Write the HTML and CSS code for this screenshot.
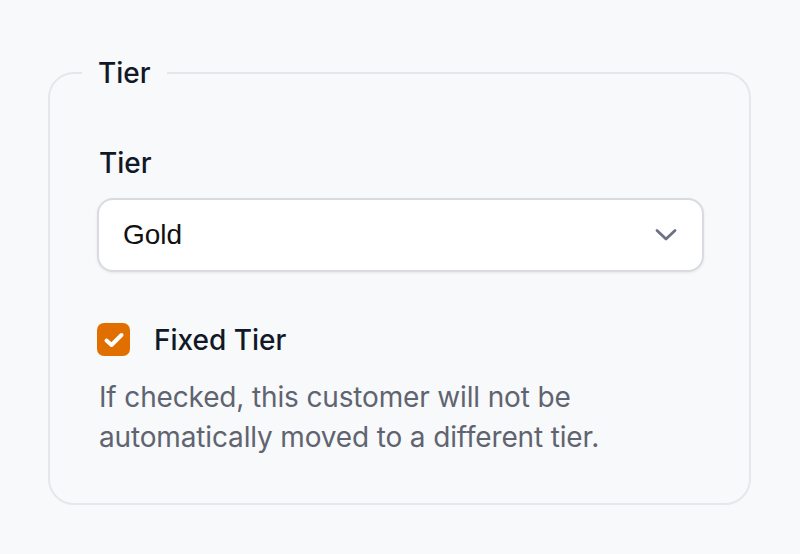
FILE: index.html
```html
<!DOCTYPE html>
<html>
<head>
<meta charset="utf-8">
<link rel="stylesheet" href="styles.css">
</head>
<body>
<fieldset class="group">
  <legend class="group-title">Tier</legend>
  <div class="field">
    <label class="field-label">Tier</label>
    <div class="select">
      <span class="select-value">Gold</span>
      <svg class="chevron" width="22" height="14" viewBox="0 0 22 14"><path d="M2 2.5 L11 11 L20 2.5" fill="none" stroke="#6b7280" stroke-width="2.8" stroke-linecap="round" stroke-linejoin="round"/></svg>
    </div>
  </div>
  <div class="check-row">
    <span class="checkbox">
      <svg width="26" height="26" viewBox="0 0 26 26"><path d="M5.5 13.5 L10.5 18 L20.5 8" fill="none" stroke="#fff" stroke-width="4" stroke-linecap="round" stroke-linejoin="round"/></svg>
    </span>
    <span class="check-label">Fixed Tier</span>
  </div>
  <p class="help">If checked, this customer will not be automatically moved to a different tier.</p>
</fieldset>
</body>
</html>
```
FILE: styles.css
```css
html, body {
  margin: 0;
  padding: 0;
  background: #f8f9fb;
}
body {
  padding: 57px 49px 0 48px;
  font-family: "Inter", "Liberation Sans", sans-serif;
  color: #111827;
}
.group {
  margin: 0;
  border: 2px solid #e5e7eb;
  border-radius: 26px;
  padding: 56px 45px 46px 47px;
  min-width: 0;
}
.group-title {
  font-size: 28px;
  line-height: 32px;
  font-weight: 500;
  padding: 0 16px;
  margin-left: -15px;
  color: #111827;
}
.field {
  display: flex;
  flex-direction: column;
  gap: 17px;
}
.field-label {
  font-size: 28px;
  line-height: 36px;
  font-weight: 500;
  padding-left: 2px;
}
.select {
  height: 74px;
  box-sizing: border-box;
  border: 2px solid #d9dbe0;
  border-radius: 16px;
  background: #fff;
  box-shadow: 0 1px 3px rgba(0,0,0,0.08);
  display: flex;
  align-items: center;
  justify-content: space-between;
  padding: 0 25px 0 24px;
}
.select-value {
  font-family: "Liberation Sans", Arial, sans-serif;
  font-size: 28px;
  color: #111;
}
.check-row {
  display: flex;
  align-items: center;
  gap: 24px;
  margin-top: 51px;
}
.checkbox {
  width: 33px;
  height: 33px;
  border-radius: 7px;
  background: #e06f00;
  display: flex;
  align-items: center;
  justify-content: center;
}
.check-label {
  font-size: 28px;
  line-height: 32px;
  font-weight: 500;
}
.help {
  margin: 21px 0 0 2px;
  font-size: 28px;
  line-height: 40px;
  letter-spacing: -0.15px;
  color: #5f6470;
  max-width: 560px;
}
```
